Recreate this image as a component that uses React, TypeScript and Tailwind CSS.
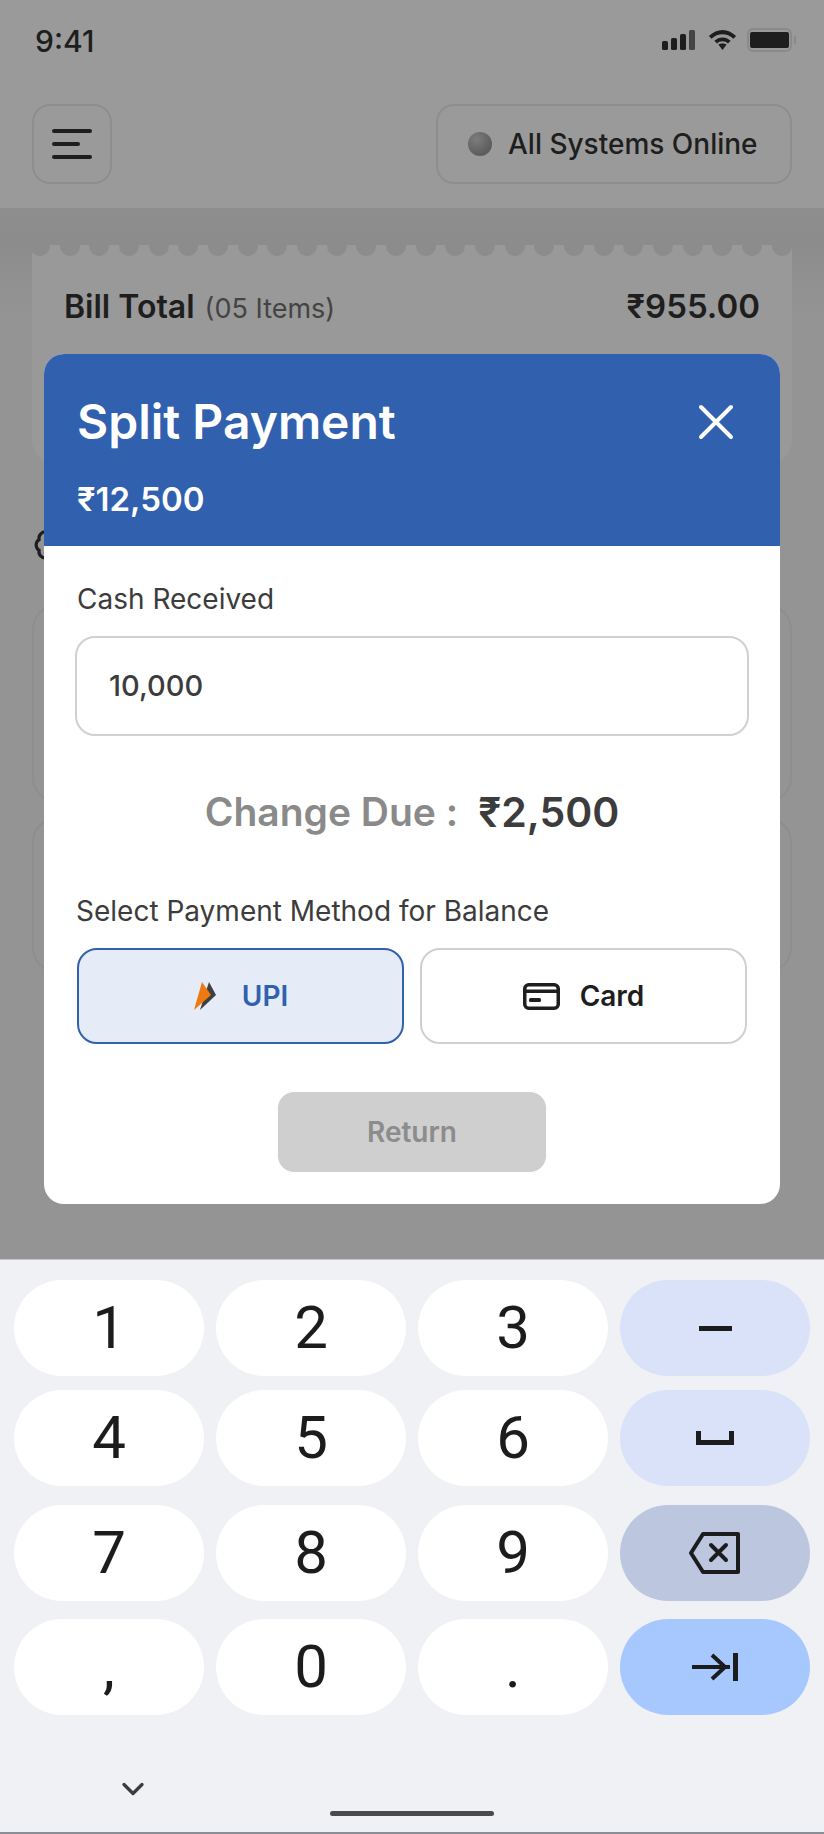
import { ChevronDown } from "lucide-react";

const sans = "font-['Inter','Liberation_Sans',sans-serif]";

const Key = ({ className, children }: { className: string; children: React.ReactNode }) => (
  <div className={`w-[190px] h-[96px] rounded-[48px] flex items-center justify-center ${className}`}>
    {children}
  </div>
);

const Digit = ({ label }: { label: string }) => (
  <Key className="bg-white">
    <span className="font-['Roboto',sans-serif] text-[60px] leading-none text-[#1c1c1e]">{label}</span>
  </Key>
);

const StatusBar = () => (
  <div className="h-[104px] flex items-start justify-between pl-[35px] pr-[28px] pt-[23px]">
    <span className="text-[30px] leading-[36px] font-medium text-[#1e1e1e]">9:41</span>
    <div className="flex items-center mt-[5px]">
      <svg width="33" height="20" viewBox="0 0 33 20" fill="#1e1e1e">
        <rect x="0" y="11" width="6" height="9" rx="1.5" />
        <rect x="9" y="8" width="6" height="12" rx="1.5" />
        <rect x="18" y="4" width="6" height="16" rx="1.5" />
        <rect x="27" y="0" width="6" height="20" rx="1.5" fill="#444444" />
      </svg>
      <svg width="29" height="20" viewBox="0 0 30 22" fill="#1e1e1e" className="ml-[13px]">
        <path d="M15 0C9.600 0 4.700 2.300 0 6.600l3 3C6.600 6.500 10.600 4.800 15 4.800s8.400 1.700 12 4.800l3-3C25.300 2.300 20.400 0 15 0z" />
        <path d="M15 8.200c-3.300 0-6.300 1.300-9 3.600L9 14.800c1.600-1.400 3.700-2.300 6-2.300s4.400.9 6 2.300l3-3c-2.700-2.300-5.700-3.600-9-3.600z" />
        <path d="M10.500 16 15 22l4.500-6c-1.200-.8-2.900-1.200-4.500-1.200s-3.300.4-4.500 1.200z" />
      </svg>
      <div className="ml-[10px] w-[45px] h-[24px] rounded-[6px] border-2 border-[#8a8a8a] px-[1px] py-[2px] flex">
        <div className="flex-1 bg-[#1e1e1e] rounded-[2px]" />
      </div>
      <div className="ml-[2px] w-[2px] h-[8px] bg-[#8a8a8a]" />
    </div>
  </div>
);

const Header = () => (
  <div className="h-[104px] flex items-start justify-between px-[32px]">
    <div className="w-[80px] h-[80px] rounded-[18px] border-2 border-[#8e8e8e] flex flex-col items-center justify-center gap-[9px]">
      <div className="w-[40px] h-[4px] rounded-full bg-[#1e1e1e]" />
      <div className="w-[28px] h-[4px] rounded-full bg-[#1e1e1e] -ml-[12px]" />
      <div className="w-[40px] h-[4px] rounded-full bg-[#1e1e1e]" />
    </div>
    <div className="w-[356px] h-[80px] rounded-[18px] border-2 border-[#8e8e8e] flex items-center pl-[30px] gap-[16px]">
      <div className="w-[24px] h-[24px] rounded-full bg-[radial-gradient(circle_at_35%_30%,#7c7c7c,#505050)]" />
      <span className="text-[28px] font-medium text-[#1e1e1e] whitespace-nowrap">All Systems Online</span>
    </div>
  </div>
);

const Scallops = () => (
  <div className="h-[11px] flex justify-between -ml-[2px] overflow-hidden">
    {Array.from({ length: 26 }).map((_, i) => (
      <div key={i} className="w-[20px] h-[20px] rounded-full bg-[#8c8c8c] -mt-[9px] shrink-0" />
    ))}
  </div>
);

const Background = () => (
  <div className="h-[1051px] bg-[linear-gradient(180deg,#8e8e8e_0px,#8c8c8c_37px,#949494_110px)] pt-[37px] px-[32px] overflow-hidden">
    <div className="h-[219px] bg-[#999999] rounded-b-[24px] overflow-hidden">
      <Scallops />
      <div className="flex items-center justify-between px-[32px] pt-[26px]">
        <div className="flex items-baseline gap-[10px]">
          <span className="text-[32px] font-semibold text-[#1e1e1e]">Bill Total</span>
          <span className="text-[27px] text-[#444]">(05 Items)</span>
        </div>
        <span className="text-[33px] font-semibold text-[#1e1e1e]">₹955.00</span>
      </div>
    </div>
    <svg width="38" height="38" viewBox="0 0 24 24" fill="none" stroke="#1e1e1e" strokeWidth="2" className="mt-[62px] ml-[1px]">
      <path d="M3.850 8.620a4 4 0 0 1 4.780-4.770 4 4 0 0 1 6.740 0 4 4 0 0 1 4.780 4.780 4 4 0 0 1 0 6.740 4 4 0 0 1-4.770 4.780 4 4 0 0 1-6.750 0 4 4 0 0 1-4.780-4.770 4 4 0 0 1 0-6.760Z" />
    </svg>
    <div className="h-[197px] mt-[41px] rounded-[24px] border-2 border-[#8e8e8e]" />
    <div className="h-[154px] mt-[16px] rounded-[24px] border-2 border-[#8e8e8e]" />
  </div>
);

const CardIcon = () => (
  <svg width="37" height="27" viewBox="0 0 37 27" fill="none">
    <rect x="1.750" y="1.750" width="33.500" height="23.500" rx="4" stroke="#1e1e1e" strokeWidth="3.500" />
    <rect x="2" y="6.500" width="33" height="3.500" fill="#1e1e1e" />
    <rect x="6" y="15" width="12" height="4" rx="1.500" fill="#1e1e1e" />
  </svg>
);

const UpiIcon = () => (
  <svg width="24" height="30" viewBox="0 0 24 30">
    <path d="M16 1 23 14 7 29Z" fill="#3f3f3f" />
    <path d="M9 1 18 14 1 29Z" fill="#ec7a0f" />
  </svg>
);

const SplitModal = () => (
  <div className="w-[736px] h-[850px] rounded-[20px] overflow-hidden bg-white flex flex-col">
    <div className="h-[192px] bg-[#3060ae] pl-[33px] pr-[46px] pt-[40px] text-white">
      <div className="flex items-center justify-between">
        <span className="text-[48px] leading-[56px] font-semibold">Split Payment</span>
        <svg width="36" height="36" viewBox="0 0 36 36" fill="none" stroke="#ffffff" strokeWidth="4" strokeLinecap="round">
          <path d="M3 3l30 30M33 3 3 33" />
        </svg>
      </div>
      <div className="text-[33px] leading-[36px] font-semibold mt-[31px]">₹12,500</div>
    </div>
    <div className="flex-1 flex flex-col px-[31px]">
      <div className="text-[28px] leading-[32px] text-[#3c3c3c] mt-[37px] ml-[2px]">Cash Received</div>
      <div className="h-[100px] mt-[21px] rounded-[20px] border-2 border-[#d0d0d0] flex items-center pl-[32px] text-[29px] font-medium text-[#3c3c3c]">
        10,000
      </div>
      <div className="flex justify-center items-center gap-[20px] mt-[52px] leading-[48px] font-semibold">
        <span className="text-[39px] text-[#8a8a8a]">Change Due :</span>
        <span className="text-[41px] text-[#3c3c3c]">₹2,500</span>
      </div>
      <div className="text-[28px] leading-[32px] text-[#3c3c3c] mt-[59px] ml-[1px]">Select Payment Method for Balance</div>
      <div className="flex gap-[16px] mt-[21px] ml-[2px]">
        <div className="w-[327px] h-[96px] rounded-[20px] border-2 border-[#3060ae] bg-[#e6ecf7] flex items-center justify-center gap-[25px]">
          <UpiIcon />
          <span className="text-[28px] font-semibold text-[#3060ae]">UPI</span>
        </div>
        <div className="w-[327px] h-[96px] rounded-[20px] border-2 border-[#d0d0d0] flex items-center justify-center gap-[20px]">
          <CardIcon />
          <span className="text-[28px] font-semibold text-[#1e1e1e]">Card</span>
        </div>
      </div>
      <div className="w-[268px] h-[80px] rounded-[16px] bg-[#cfcfcf] self-center mt-[48px] flex items-center justify-center text-[28px] font-semibold text-[#8c8c8c]">
        Return
      </div>
    </div>
  </div>
);

const Keyboard = () => (
  <div className="h-[575px] bg-[#f0f1f4] px-[14px] pt-[20px] flex flex-col border-t border-t-[#c4c5c8] border-b-2 border-b-[#8b8e97]">
    <div className="flex gap-[12px]">
      <Digit label="1" />
      <Digit label="2" />
      <Digit label="3" />
      <Key className="bg-[#d9e2f8]">
        <div className="w-[33px] h-[5px] bg-[#1c1c1e]" />
      </Key>
    </div>
    <div className="flex gap-[12px] mt-[14px]">
      <Digit label="4" />
      <Digit label="5" />
      <Digit label="6" />
      <Key className="bg-[#d9e2f8]">
        <svg width="38" height="14" viewBox="0 0 38 14" fill="none" stroke="#1c1c1e" strokeWidth="5">
          <path d="M2.500 0v11.500h33V0" />
        </svg>
      </Key>
    </div>
    <div className="flex gap-[12px] mt-[19px]">
      <Digit label="7" />
      <Digit label="8" />
      <Digit label="9" />
      <Key className="bg-[#bcc6de]">
        <svg width="52" height="42" viewBox="0 0 52 42" fill="none" stroke="#1c1c1e" strokeWidth="4" strokeLinejoin="round">
          <path d="M14 2h35v38H14L2 21Z" />
          <path d="M22 13l15 15M37 13 22 28" strokeLinecap="round" />
        </svg>
      </Key>
    </div>
    <div className="flex gap-[12px] mt-[18px]">
      <Digit label="," />
      <Digit label="0" />
      <Digit label="." />
      <Key className="bg-[#a6c8ff]">
        <svg width="46" height="28" viewBox="0 0 46 28" fill="none" stroke="#1c1c1e" strokeWidth="4">
          <path d="M0 14h38M20 2l13 12-13 12" />
          <path d="M43.500 0v28" strokeWidth="5" />
        </svg>
      </Key>
    </div>
    <div className="relative flex-1">
      <ChevronDown size={36} strokeWidth={2.2} className="absolute left-[101px] top-[56px] text-[#3c3c3c]" />
      <div className="absolute left-[316px] top-[96px] w-[164px] h-[5px] rounded-full bg-[#4a4a4a]" />
    </div>
  </div>
);

export default function App() {
  return (
    <div className={`w-[824px] h-[1834px] flex flex-col overflow-hidden ${sans}`}>
      <div className="relative h-[1259px] bg-[#9a9a9a] overflow-hidden">
        <StatusBar />
        <Header />
        <Background />
        <div className="absolute inset-0 flex justify-center pt-[354px]">
          <SplitModal />
        </div>
      </div>
      <Keyboard />
    </div>
  );
}
